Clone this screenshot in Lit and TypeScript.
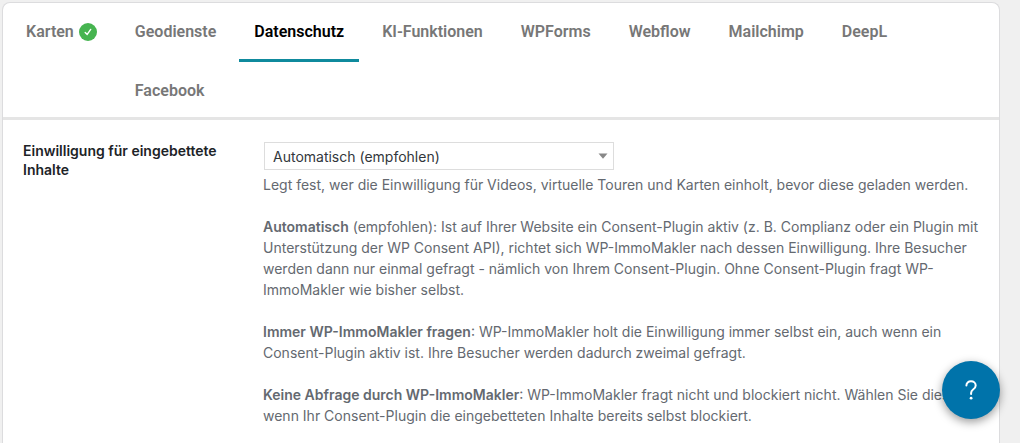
import { LitElement, html, css } from "lit";
import { customElement, property, state } from "lit/decorators.js";
import { classMap } from "lit/directives/class-map.js";

interface Tab {
  id: string;
  label: string;
  done?: boolean;
}

const TABS: Tab[] = [
  { id: "karten", label: "Karten", done: true },
  { id: "geodienste", label: "Geodienste" },
  { id: "datenschutz", label: "Datenschutz" },
  { id: "ki", label: "KI-Funktionen" },
  { id: "wpforms", label: "WPForms" },
  { id: "webflow", label: "Webflow" },
  { id: "mailchimp", label: "Mailchimp" },
  { id: "deepl", label: "DeepL" },
  { id: "facebook", label: "Facebook" },
];

@customElement("settings-tabs")
class SettingsTabs extends LitElement {
  @property() active = "";

  static styles = css`
    :host {
      display: block;
    }
    .tabs {
      display: flex;
      align-items: flex-start;
      gap: 8px;
      padding: 0 8px;
      border-bottom: 3px solid #e5e5e5;
    }
    .rest {
      display: flex;
      flex-wrap: wrap;
      column-gap: 8px;
      margin-bottom: -4px;
    }
    .tab {
      display: flex;
      align-items: center;
      gap: 5px;
      height: 59px;
      box-sizing: border-box;
      padding: 2px 15px 0;
      border-bottom: 3px solid transparent;
      color: #777;
      font: 600 16px/24px Roboto, "Inter", sans-serif;
      text-decoration: none;
    }
    .active {
      color: #000;
      border-bottom-color: #0f8a9d;
    }
    .check {
      width: 18px;
      height: 18px;
    }
  `;

  private tab(t: Tab) {
    return html`<a
      href="#${t.id}"
      class=${classMap({ tab: true, active: t.id === this.active })}
      @click=${() => this.dispatchEvent(new CustomEvent("tab-change", { detail: t.id }))}
      >${t.label}${t.done
        ? html`<svg class="check" viewBox="0 0 18 18" role="img" aria-label="Aktiv">
            <circle cx="9" cy="9" r="9" fill="#46b450" />
            <path d="M6.2 9.4 8.2 11.4 11.7 6.4" fill="none" stroke="#fff" stroke-width="1.4" stroke-linecap="round" stroke-linejoin="round" />
          </svg>`
        : ""}</a
    >`;
  }

  render() {
    const [first, ...rest] = TABS;
    return html`<nav class="tabs">
      ${this.tab(first)}
      <div class="rest">${rest.map((t) => this.tab(t))}</div>
    </nav>`;
  }
}

@customElement("app-root")
class AppRoot extends LitElement {
  @state() private active = "datenschutz";

  static styles = css`
    :host {
      display: block;
      min-height: 100vh;
      box-sizing: border-box;
      padding: 2px 20px 0 2px;
      background: #f0f0f0;
      font: 14px/21px "Inter", sans-serif;
      color: #646970;
    }
    .panel {
      min-height: calc(100vh - 2px);
      box-sizing: border-box;
      background: #fff;
      border: 1px solid #dcdcde;
      border-bottom: 0;
      border-radius: 8px 8px 0 0;
    }
    .field {
      display: grid;
      grid-template-columns: 200px minmax(0, 728px);
      column-gap: 40px;
      padding: 21px 4px 16px 20px;
    }
    .label {
      color: #1d2327;
      font-weight: 600;
      line-height: 19px;
    }
    .picker {
      position: relative;
      max-width: 350px;
      margin: 1px 0 4px 1px;
    }
    .select {
      display: block;
      width: 100%;
      height: 28px;
      box-sizing: border-box;
      padding: 0 24px 0 8px;
      border: 1px solid #ddd;
      border-radius: 0;
      appearance: none;
      background: #fff;
      color: #32373c;
      font: inherit;
    }
    .arrow {
      position: absolute;
      top: 11px;
      right: 6px;
      width: 10px;
      height: 6px;
      pointer-events: none;
    }
    .help {
      margin: 0 0 21px;
    }
    .help:last-child {
      margin-bottom: 0;
    }
    b {
      font-weight: 600;
    }
    .fab {
      position: fixed;
      right: 20px;
      bottom: 24px;
      width: 58px;
      height: 58px;
      display: grid;
      place-items: center;
      padding: 0;
      border: 0;
      border-radius: 50%;
      background: #0073aa;
      box-shadow: 0 3px 10px rgba(0, 0, 0, 0.4);
      cursor: pointer;
    }
    .mark {
      width: 12px;
      height: 20px;
    }
  `;

  render() {
    return html`
      <main class="panel">
        <settings-tabs
          .active=${this.active}
          @tab-change=${(e: CustomEvent<string>) => (this.active = e.detail)}
        ></settings-tabs>
        <section class="field">
          <label class="label" for="consent">Einwilligung für eingebettete Inhalte</label>
          <div>
            <div class="picker">
              <select class="select" id="consent">
                <option>Automatisch (empfohlen)</option>
                <option>Immer WP-ImmoMakler fragen</option>
                <option>Keine Abfrage durch WP-ImmoMakler</option>
              </select>
              <svg class="arrow" viewBox="0 0 10 6" aria-hidden="true"><path d="M0.5 0.5h9L5 5.7z" fill="#888" /></svg>
            </div>
            <p class="help">
              Legt fest, wer die Einwilligung für Videos, virtuelle Touren und Karten einholt, bevor diese geladen werden.
            </p>
            <p class="help">
              <b>Automatisch</b> (empfohlen): Ist auf Ihrer Website ein Consent-Plugin aktiv (z. B. Complianz oder ein
              Plugin mit Unterstützung der WP Consent API), richtet sich WP-ImmoMakler nach dessen Einwilligung. Ihre
              Besucher werden dann nur einmal gefragt - nämlich von Ihrem Consent-Plugin. Ohne Consent-Plugin fragt
              WP-ImmoMakler wie bisher selbst.
            </p>
            <p class="help">
              <b>Immer WP-ImmoMakler fragen</b>: WP-ImmoMakler holt die Einwilligung immer selbst ein, auch wenn ein
              Consent-Plugin aktiv ist. Ihre Besucher werden dadurch zweimal gefragt.
            </p>
            <p class="help">
              <b>Keine Abfrage durch WP-ImmoMakler</b>: WP-ImmoMakler fragt nicht und blockiert nicht. Wählen Sie dies
              nur, wenn Ihr Consent-Plugin die eingebetteten Inhalte bereits selbst blockiert.
            </p>
          </div>
        </section>
      </main>
      <button class="fab" type="button" aria-label="Hilfe">
        <svg class="mark" viewBox="0 0 12 20" aria-hidden="true">
          <path d="M1.4 5.6C1.4 3 3.300 1.300 6 1.300s4.700 1.700 4.700 4.200c0 2-1.100 3-2.600 4C6.700 10.500 6.100 11.300 6.100 13v1" fill="none" stroke="#fff" stroke-width="2" stroke-linecap="round" />
          <circle cx="6.100" cy="18.200" r="1.400" fill="#fff" />
        </svg>
      </button>
    `;
  }
}
